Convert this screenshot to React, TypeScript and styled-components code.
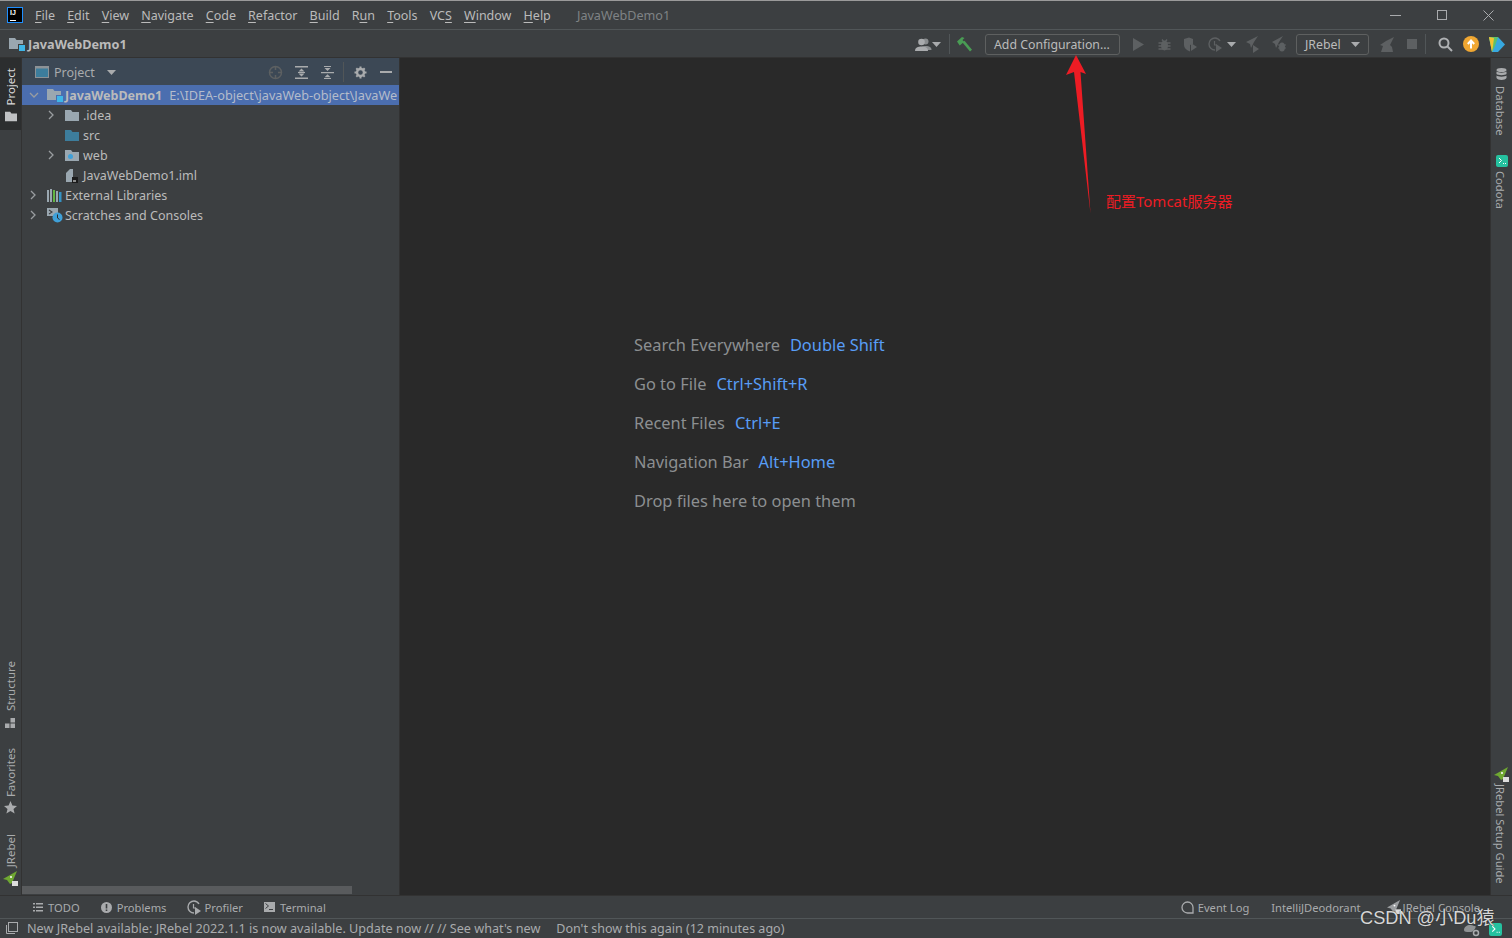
import React from "react";
import styled, { createGlobalStyle } from "styled-components";

const GlobalStyle = createGlobalStyle`
  html, body { margin: 0; padding: 0; height: 100%; background: #3c3f41; overflow: hidden; }
  #root { height: 100%; }
  * { box-sizing: border-box; }
`;

const FONT = `"Noto Sans", "Noto Sans CJK SC", sans-serif`;

const Page = styled.div`
  position: relative;
  width: 1512px;
  height: 938px;
  display: flex;
  flex-direction: column;
  background: #3c3f41;
  color: #bbbbbb;
  font-family: ${FONT};
  font-size: 12.5px;
  overflow: hidden;
`;

const TitleBar = styled.div`
  height: 30px;
  display: flex;
  align-items: center;
  border-top: 1px solid #9a9a9a;
  border-bottom: 1px solid #515658;
  padding-left: 7px;
  flex: none;
`;
const Logo = styled.div`
  width: 16px;
  height: 16px;
  background: #000;
  border: 1px solid #1f8fff;
  color: #fff;
  font: bold 7px/9px "Liberation Sans", sans-serif;
  padding-left: 2px;
  position: relative;
  margin-right: 12px;
  &::after {
    content: "";
    position: absolute;
    left: 2px;
    bottom: 1px;
    width: 6px;
    height: 1px;
    background: #fff;
  }
`;
const MenuItem = styled.span`
  margin-right: 12.15px;
  font-size: 12.5px;
  color: #bbbbbb;
  u { text-underline-offset: 2px; }
`;
const WindowTitle = styled.span`
  margin-left: 14px;
  color: #7f8385;
  font-size: 12.6px;
`;
const WindowControls = styled.div`
  margin-left: auto;
  display: flex;
  align-items: center;
  gap: 36px;
  padding-right: 18px;
`;

const NavBar = styled.div`
  height: 28px;
  display: flex;
  align-items: center;
  flex: none;
  padding-left: 9px;
  border-bottom: 1px solid #323232;
`;
const Crumb = styled.span`
  font-weight: 700;
  font-size: 12.7px;
  margin-left: 3px;
  color: #bbbbbb;
`;
const NavTools = styled.div`
  margin-left: auto;
  display: flex;
  align-items: center;
  height: 100%;
  padding-top: 1px;
`;
const Slot = styled.span<{ $w: number; $ml?: number }>`
  width: ${(p) => p.$w}px;
  margin-left: ${(p) => p.$ml ?? 0}px;
  display: inline-flex;
  align-items: center;
  justify-content: center;
  flex: none;
`;
const Divider = styled.span<{ $ml: number }>`
  width: 1px;
  height: 20px;
  margin-left: ${(p) => p.$ml}px;
  background: #515658;
  flex: none;
`;
const ComboBox = styled.div<{ $w: number; $ml: number }>`
  width: ${(p) => p.$w}px;
  height: 21px;
  margin-left: ${(p) => p.$ml}px;
  border: 1px solid #5e6060;
  border-radius: 3px;
  display: flex;
  align-items: center;
  padding: 0 8px;
  font-size: 12.3px;
  color: #bbbbbb;
  white-space: nowrap;
  flex: none;
  justify-content: space-between;
`;

const Main = styled.div`
  flex: 1;
  min-height: 0;
  display: flex;
`;
const LeftStripe = styled.div`
  width: 22px;
  flex: none;
  display: flex;
  flex-direction: column;
  justify-content: space-between;
  border-right: 1px solid #323232;
  padding-bottom: 9px;
`;
const RightStripe = styled.div`
  width: 22px;
  flex: none;
  display: flex;
  flex-direction: column;
  justify-content: space-between;
  border-left: 1px solid #323232;
  padding: 10px 0 11px;
`;
const StripeGroup = styled.div<{ $gap: number }>`
  display: flex;
  flex-direction: column;
  align-items: center;
  gap: ${(p) => p.$gap}px;
`;
const LeftTab = styled.div<{ $active?: boolean; $gap?: number }>`
  display: flex;
  flex-direction: column-reverse;
  align-items: center;
  justify-content: flex-end;
  gap: ${(p) => p.$gap ?? 4}px;
  width: 21px;
  padding: ${(p) => (p.$active ? "10px 0 8px" : "0")};
  background: ${(p) => (p.$active ? "#2c2e2f" : "transparent")};
  color: ${(p) => (p.$active ? "#d8d8d8" : "#a9abad")};
`;
const RightTab = styled.div<{ $gap: number }>`
  display: flex;
  flex-direction: column;
  align-items: center;
  gap: ${(p) => p.$gap}px;
  width: 21px;
  color: #a9abad;
`;
const VerticalLeft = styled.span`
  writing-mode: vertical-rl;
  transform: rotate(180deg);
  font-size: 11.5px;
  line-height: 14px;
  white-space: nowrap;
  margin-left: 1px;
`;
const VerticalRight = styled.span`
  writing-mode: vertical-rl;
  font-size: 11.2px;
  line-height: 14px;
  white-space: nowrap;
  margin-right: 3px;
`;

const ProjectPanel = styled.div`
  width: 378px;
  flex: none;
  display: flex;
  flex-direction: column;
  border-right: 1px solid #323232;
`;
const PanelHeader = styled.div`
  height: 27px;
  flex: none;
  display: flex;
  align-items: center;
  background: #3c4855;
  padding: 1px 0 0 13px;
  color: #a9abad;
`;
const PanelTitle = styled.span`
  margin-left: 5px;
  font-size: 12.5px;
`;
const Tree = styled.div`
  flex: 1;
  min-height: 0;
`;
const Row = styled.div<{ $indent: number; $selected?: boolean }>`
  height: 20px;
  display: flex;
  align-items: center;
  padding-left: ${(p) => p.$indent}px;
  background: ${(p) => (p.$selected ? "#4b6eaf" : "transparent")};
  white-space: nowrap;
  overflow: hidden;
  font-size: 12.5px;
`;
const Chevron = styled.span`
  width: 18px;
  display: inline-flex;
  flex: none;
`;
const RowIcon = styled.span`
  width: 18px;
  display: inline-flex;
  flex: none;
`;
const ProjectName = styled.b`
  font-weight: 700;
  color: #bbbbbb;
`;
const ProjectPath = styled.span`
  margin-left: 7px;
  color: #b4bccb;
  font-size: 12.7px;
`;
const ScrollThumb = styled.div`
  width: 330px;
  height: 8px;
  margin-bottom: 1px;
  background: #595b5d;
  flex: none;
`;

const Editor = styled.div`
  flex: 1;
  min-width: 0;
  background: #292929;
  padding: 275px 0 0 234px;
  display: flex;
  flex-direction: column;
  gap: 16px;
`;
const Hint = styled.div`
  height: 23px;
  line-height: 23px;
  font-size: 16.4px;
  color: #8c8f91;
  display: flex;
  gap: 10px;
  white-space: nowrap;
`;
const Shortcut = styled.span`
  color: #589df6;
`;

const ToolBar = styled.div`
  height: 23px;
  flex: none;
  display: flex;
  align-items: center;
  border-top: 1px solid #323232;
  padding-left: 33px;
  font-size: 11.2px;
  color: #a9abad;
`;
const ToolItem = styled.span<{ $gap?: number; $ml?: number }>`
  display: inline-flex;
  align-items: center;
  gap: ${(p) => p.$gap ?? 4}px;
  margin-left: ${(p) => p.$ml ?? 0}px;
  white-space: nowrap;
`;
const ToolRight = styled.div`
  margin-left: auto;
  display: flex;
  align-items: center;
  padding-right: 32px;
`;
const StatusBar = styled.div`
  height: 20px;
  flex: none;
  display: flex;
  align-items: center;
  border-top: 1px solid #515658;
  padding: 0 0 1px 6px;
  color: #a9abad;
  white-space: nowrap;
`;
const StatusText = styled.span<{ $ml: number; $size: number }>`
  margin-left: ${(p) => p.$ml}px;
  font-size: ${(p) => p.$size}px;
`;
const StatusRight = styled.div`
  margin-left: auto;
  display: flex;
  align-items: center;
  gap: 9px;
  padding: 3px 10px 0 0;
`;

const Annotation = styled.svg`
  position: absolute;
  left: 1055px;
  top: 50px;
`;
const AnnotationText = styled.span`
  position: absolute;
  left: 1106px;
  top: 191px;
  color: #ed1c24;
  font-size: 15px;
  line-height: 20px;
  font-family: "Noto Sans", "Noto Sans CJK SC", sans-serif;
`;
const Watermark = styled.span`
  position: absolute;
  left: 1360px;
  top: 906px;
  color: #d6d6d6;
  font-size: 18.2px;
  line-height: 24px;
  white-space: nowrap;
  font-family: "Liberation Sans", "Noto Sans CJK SC", sans-serif;
  text-shadow: 0 0 1px #222;
`;

const Folder = ({ color = "#9aa7b0", size = 14 }: { color?: string; size?: number }) => (
  <svg width={size} height={size} viewBox="0 0 14 14">
    <path d="M0 2h6l1.5 2H14v9H0z" fill={color} />
  </svg>
);
const ModuleFolder = ({ size = 16 }: { size?: number }) => (
  <svg width={size} height={size} viewBox="0 0 16 16">
    <path d="M0 2h6l1.5 2H14v4H9v5H0z" fill="#9aa7b0" />
    <rect x="10" y="9" width="6" height="6" fill="#3fb6e8" />
  </svg>
);
const Arrow = ({ down }: { down?: boolean }) => (
  <svg width="10" height="10" viewBox="0 0 10 10">
    <path d={down ? "M1 3l4 4 4-4" : "M2 1l4 4-4 4"} fill="none" stroke="#9a9da0" strokeWidth="1.3" />
  </svg>
);
const Caret = ({ color = "#a9abad" }: { color?: string }) => (
  <svg width="9" height="5" viewBox="0 0 9 5">
    <path d="M0 0h9L4.5 5z" fill={color} />
  </svg>
);
const DIM = "#5d6062";

const ProjectTool = () => (
  <svg width="14" height="12" viewBox="0 0 14 12">
    <rect width="14" height="12" fill="#8d9296" />
    <rect x="1" y="2.5" width="12" height="8.5" fill="#3d7d9c" />
  </svg>
);
const Locate = () => (
  <svg width="15" height="15" viewBox="0 0 15 15" fill="none" stroke={DIM} strokeWidth="1.5">
    <circle cx="7.5" cy="7.5" r="6" />
    <path d="M7.5 1v4M7.5 10v4M1 7.5h4M10 7.5h4" />
  </svg>
);
const ExpandAll = () => (
  <svg width="13" height="13" viewBox="0 0 13 13" fill="#a9abad">
    <path d="M0 0h13v1.5H0zM0 11.500h13V13H0zM6.500 2.500L9.500 5.500h-6zM6.500 10.500L3.500 7.500h6zM3 6h7v1H3z" />
  </svg>
);
const CollapseAll = () => (
  <svg width="13" height="13" viewBox="0 0 13 13" fill="#a9abad">
    <path d="M0 6h13v1.300H0zM6.500 5L3.500 2h6zM6.500 8.300l3 3h-6zM3 0h7v1H3zM3 12h7v1H3z" />
  </svg>
);
const Gear = ({ size = 13, color = "#a9abad" }: { size?: number; color?: string }) => (
  <svg width={size} height={size} viewBox="0 0 13 13">
    <circle cx="6.500" cy="6.500" r="3.500" fill="none" stroke={color} strokeWidth="2.400" />
    <path d="M6.500 0.500v12M0.500 6.500h12M2.300 2.300l8.400 8.400M10.700 2.300l-8.400 8.400" stroke={color} strokeWidth="2" strokeDasharray="2 8 2 0" />
  </svg>
);
const Hide = () => (
  <svg width="12" height="2" viewBox="0 0 12 2">
    <rect width="12" height="2" fill="#a9abad" />
  </svg>
);
const FileIcon = () => (
  <svg width="14" height="15" viewBox="0 0 14 15">
    <path d="M1 5l4-4h3v13H1z" fill="#9aa7b0" />
    <rect x="7" y="9" width="6" height="6" fill="#1b1b1b" />
    <rect x="8" y="12.500" width="3" height="1" fill="#fff" />
  </svg>
);
const Libraries = () => (
  <svg width="15" height="13" viewBox="0 0 15 13">
    <rect x="0" y="1" width="2" height="12" fill="#9aa7b0" />
    <rect x="3" y="0" width="2" height="13" fill="#9aa7b0" />
    <rect x="6" y="1" width="2" height="12" fill="#62b543" />
    <rect x="9" y="2" width="2" height="11" fill="#9aa7b0" />
    <rect x="12" y="3" width="2.500" height="10" fill="#3592c4" />
  </svg>
);
const Scratches = () => (
  <svg width="16" height="15" viewBox="0 0 16 15">
    <rect x="0" y="0" width="11" height="8" fill="#9aa7b0" />
    <path d="M2 2l3 2-3 2" fill="none" stroke="#3c3f41" strokeWidth="1.100" />
    <circle cx="10.500" cy="9.500" r="5" fill="#3fa0d8" />
    <path d="M10.500 6.500v3.500l2 1.500" fill="none" stroke="#2b2b2b" strokeWidth="1" />
  </svg>
);
const WebFolder = () => (
  <svg width="14" height="14" viewBox="0 0 14 14">
    <path d="M0 2h6l1.500 2H14v9H0z" fill="#9aa7b0" />
    <circle cx="5.500" cy="8.500" r="2.500" fill="#3fa0d8" />
  </svg>
);

const People = () => (
  <svg width="17" height="13" viewBox="0 0 17 13" fill="#a9abad">
    <circle cx="10.500" cy="3.500" r="3" fill="#8a8d8f" />
    <path d="M5 12c0-3 3-4 6-4s5.500 1 5.500 4z" fill="#8a8d8f" />
    <circle cx="6.500" cy="4" r="3.300" />
    <path d="M0 13c0-3.500 3-4.500 6.500-4.500S13 9.500 13 13z" />
  </svg>
);
const Hammer = () => (
  <svg width="16" height="15" viewBox="0 0 16 15" fill="#499c54">
    <path d="M0 4.500L5 0l2.500 1-2 2 1.700 1.700L2.700 8.500z" />
    <path d="M5.500 5.500l2-1.800 7.500 9-2 1.800z" />
  </svg>
);
const Play = () => (
  <svg width="11" height="13" viewBox="0 0 11 13">
    <path d="M0 0l11 6.500L0 13z" fill={DIM} />
  </svg>
);
const Bug = ({ size = 13 }: { size?: number }) => (
  <svg width={size} height={size} viewBox="0 0 13 13" stroke={DIM} fill={DIM}>
    <ellipse cx="6.500" cy="7.500" rx="3.500" ry="5" stroke="none" />
    <path d="M4 1.500l1.500 2M9 1.500l-1.500 2M0.500 5h12M0.500 8h12M0.500 11h12" strokeWidth="1.300" fill="none" />
  </svg>
);
const Coverage = () => (
  <svg width="15" height="15" viewBox="0 0 15 15" fill={DIM}>
    <path d="M1 2l5-1.500L10 2v5l-3 1v6.500C3 13 1 11 1 8z" />
    <path d="M8 6l6 4-6 4z" />
  </svg>
);
const Profiler = ({ color = DIM }: { color?: string }) => (
  <svg width="15" height="15" viewBox="0 0 15 15">
    <path d="M7 1a6 6 0 1 0 0 12" fill="none" stroke={color} strokeWidth="1.400" />
    <path d="M7 1a6 6 0 0 1 5 3" fill="none" stroke={color} strokeWidth="1.400" />
    <path d="M6.500 4v4h2" fill="none" stroke={color} strokeWidth="1.200" />
    <path d="M8 7l6 4-6 4z" fill={color} />
  </svg>
);
const RocketPlay = () => (
  <svg width="15" height="17" viewBox="0 0 15 17" fill={DIM}>
    <path d="M13 0L1 6l4 2 1 4 3-6z" />
    <path d="M8 9l6 4-6 4z" />
  </svg>
);
const RocketBug = () => (
  <svg width="16" height="16" viewBox="0 0 16 16" fill={DIM}>
    <path d="M12 0L1 6l3 2 1 4 3-6z" />
    <ellipse cx="11" cy="11" rx="3" ry="4.500" />
    <path d="M7 9h8M7 12h8" stroke={DIM} />
  </svg>
);
const Rabbit = () => (
  <svg width="16" height="16" viewBox="0 0 16 16" fill={DIM}>
    <path d="M15 1L7 5 1 9l3 1-2 6h12l-1-5-2-2z" />
  </svg>
);
const Stop = () => (
  <svg width="10" height="10" viewBox="0 0 10 10">
    <rect width="10" height="10" fill={DIM} />
  </svg>
);
const Search = () => (
  <svg width="15" height="15" viewBox="0 0 15 15" fill="none" stroke="#afb1b3" strokeWidth="2">
    <circle cx="6" cy="6" r="4.500" />
    <path d="M9.500 9.500l4.500 4.500" />
  </svg>
);
const UpdateBadge = () => (
  <svg width="16" height="16" viewBox="0 0 16 16">
    <circle cx="8" cy="8" r="8" fill="#f0a732" />
    <path d="M8 12.500V5M4.800 8L8 4.500 11.200 8" fill="none" stroke="#fff" strokeWidth="2" />
  </svg>
);
const ColorLogo = () => (
  <svg width="16" height="15" viewBox="0 0 16 15">
    <path d="M0 0h9l7 7.500-7 7.500H3z" fill="#37a8e0" />
    <path d="M0 0h9L6 9 3 15z" fill="#5dc06a" />
    <path d="M0 0l5 1-1 8-1 6z" fill="#f2c230" />
  </svg>
);
const Database = () => (
  <svg width="11" height="12" viewBox="0 0 11 12" fill="#a9abad">
    <ellipse cx="5.500" cy="2" rx="5" ry="2" />
    <path d="M0.500 3.500c1 1.500 9 1.500 10 0V6c-1 1.500-9 1.500-10 0zM0.500 7.500c1 1.500 9 1.500 10 0V10c-1 2.500-9 2.500-10 0z" />
  </svg>
);
const Codota = ({ size = 12 }: { size?: number }) => (
  <svg width={size} height={size} viewBox="0 0 12 12">
    <rect width="12" height="12" rx="2" fill="#25c2a0" />
    <path d="M3 3l2.500 2.500L3 8" fill="none" stroke="#fff" strokeWidth="1" />
    <path d="M7 8.500h1M9 8.500h1" stroke="#fff" strokeWidth="1" />
  </svg>
);
const JRebelMark = ({ color = "#6fa832", size = 15 }: { color?: string; size?: number }) => (
  <svg width={size} height={size} viewBox="0 0 15 15">
    <path d="M14 0L0 8l4 1 3 4 2-1z" fill={color} />
    <circle cx="8" cy="6" r="1" fill="#fff" />
    <rect x="9" y="10" width="6" height="5" fill="#ddd" />
  </svg>
);
const Structure = () => (
  <svg width="11" height="10" viewBox="0 0 11 10" fill="#a9abad">
    <rect x="5.500" y="0" width="4.500" height="4.500" />
    <rect x="0" y="5.500" width="4.500" height="4.500" />
    <rect x="5.500" y="5.500" width="4.500" height="4.500" />
  </svg>
);
const Star = () => (
  <svg width="13" height="13" viewBox="0 0 13 13">
    <path d="M6.500 0l1.900 4.500 4.600.4-3.500 3 1.100 4.600-4.100-2.500-4.100 2.500 1.100-4.600L0 4.900l4.600-.4z" fill="#a9abad" />
  </svg>
);
const Todo = () => (
  <svg width="10" height="9" viewBox="0 0 10 9" fill="#a9abad">
    <path d="M0 0h2v1.500H0zM3 0h7v1.500H3zM0 3.500h2V5H0zM3 3.500h7V5H3zM0 7h2v1.500H0zM3 7h7v1.500H3z" />
  </svg>
);
const Problems = () => (
  <svg width="11" height="11" viewBox="0 0 11 11">
    <circle cx="5.500" cy="5.500" r="5.500" fill="#a9abad" />
    <path d="M4.700 2h1.600v4.500H4.700zM4.700 7.500h1.600V9H4.700z" fill="#3c3f41" />
  </svg>
);
const Terminal = () => (
  <svg width="11" height="10" viewBox="0 0 11 10">
    <rect width="11" height="10" fill="#a9abad" />
    <path d="M1.500 1.500L4.500 4 1.500 6.500M5 7.500h4" fill="none" stroke="#3c3f41" strokeWidth="1" />
  </svg>
);
const EventLog = () => (
  <svg width="13" height="13" viewBox="0 0 13 13">
    <path d="M6.500 1a5.500 5.500 0 1 0 0 11H12V6.500A5.500 5.500 0 0 0 6.500 1z" fill="none" stroke="#a9abad" strokeWidth="1.300" />
  </svg>
);
const Frame = () => (
  <svg width="12" height="12" viewBox="0 0 12 12" fill="none" stroke="#a9abad">
    <rect x="2.500" y="0.500" width="9" height="9" />
    <path d="M0.500 3v8.500H9" />
  </svg>
);
const CloudGear = () => (
  <svg width="16" height="14" viewBox="0 0 16 14">
    <path d="M0 7c0-3 3-5 6-5s3 1 5 1-1 6-4 6H3C1 9 0 8 0 7z" fill="#8f9294" />
    <circle cx="12" cy="10" r="2.500" fill="none" stroke="#a9abad" strokeWidth="1.500" />
  </svg>
);

const menu: [string, string, string][] = [
  ["", "F", "ile"],
  ["", "E", "dit"],
  ["", "V", "iew"],
  ["", "N", "avigate"],
  ["", "C", "ode"],
  ["", "R", "efactor"],
  ["", "B", "uild"],
  ["R", "u", "n"],
  ["", "T", "ools"],
  ["VC", "S", ""],
  ["", "W", "indow"],
  ["", "H", "elp"],
];

const hints: [string, string][] = [
  ["Search Everywhere", "Double Shift"],
  ["Go to File", "Ctrl+Shift+R"],
  ["Recent Files", "Ctrl+E"],
  ["Navigation Bar", "Alt+Home"],
  ["Drop files here to open them", ""],
];

export default function App() {
  return (
    <Page>
      <GlobalStyle />
      <TitleBar>
        <Logo>IJ</Logo>
        {menu.map(([before, key, after]) => (
          <MenuItem key={before + key}>
            {before}
            <u>{key}</u>
            {after}
          </MenuItem>
        ))}
        <WindowTitle>JavaWebDemo1</WindowTitle>
        <WindowControls>
          <svg width="11" height="1" viewBox="0 0 11 1">
            <rect width="11" height="1" fill="#a9abad" />
          </svg>
          <svg width="10" height="10" viewBox="0 0 10 10" fill="none" stroke="#a9abad">
            <rect x="0.500" y="0.500" width="9" height="9" />
          </svg>
          <svg width="11" height="11" viewBox="0 0 11 11" stroke="#a9abad">
            <path d="M0.500 0.500l10 10M10.500 0.500l-10 10" />
          </svg>
        </WindowControls>
      </TitleBar>

      <NavBar>
        <ModuleFolder />
        <Crumb>JavaWebDemo1</Crumb>
        <NavTools>
          <Slot $w={17}><People /></Slot>
          <Slot $w={9} $ml={0}><Caret /></Slot>
          <Divider $ml={8} />
          <Slot $w={16} $ml={7}><Hammer /></Slot>
          <ComboBox $w={135} $ml={12}>Add Configuration...</ComboBox>
          <Slot $w={11} $ml={13}><Play /></Slot>
          <Slot $w={13} $ml={14}><Bug /></Slot>
          <Slot $w={15} $ml={12}><Coverage /></Slot>
          <Slot $w={15} $ml={10}><Profiler /></Slot>
          <Slot $w={9} $ml={4}><Caret /></Slot>
          <Slot $w={15} $ml={9}><RocketPlay /></Slot>
          <Slot $w={16} $ml={11}><RocketBug /></Slot>
          <ComboBox $w={73} $ml={9}>
            JRebel
            <Caret />
          </ComboBox>
          <Slot $w={16} $ml={10}><Rabbit /></Slot>
          <Slot $w={10} $ml={12}><Stop /></Slot>
          <Divider $ml={8} />
          <Slot $w={15} $ml={12}><Search /></Slot>
          <Slot $w={16} $ml={10}><UpdateBadge /></Slot>
          <Slot $w={16} $ml={10}><ColorLogo /></Slot>
          <Slot $w={7} />
        </NavTools>
      </NavBar>

      <Main>
        <LeftStripe>
          <LeftTab $active>
            <Slot $w={12}><Folder color="#c0c2c4" size={12} /></Slot>
            <VerticalLeft>Project</VerticalLeft>
          </LeftTab>
          <StripeGroup $gap={20}>
            <LeftTab $gap={6}>
              <Structure />
              <VerticalLeft>Structure</VerticalLeft>
            </LeftTab>
            <LeftTab>
              <Star />
              <VerticalLeft>Favorites</VerticalLeft>
            </LeftTab>
            <LeftTab>
              <JRebelMark />
              <VerticalLeft>JRebel</VerticalLeft>
            </LeftTab>
          </StripeGroup>
        </LeftStripe>

        <ProjectPanel>
          <PanelHeader>
            <ProjectTool />
            <PanelTitle>Project</PanelTitle>
            <Slot $w={9} $ml={12}><Caret /></Slot>
            <Slot $w={15} $ml={152}><Locate /></Slot>
            <Slot $w={13} $ml={12}><ExpandAll /></Slot>
            <Slot $w={13} $ml={13}><CollapseAll /></Slot>
            <Divider $ml={9} />
            <Slot $w={13} $ml={10}><Gear /></Slot>
            <Slot $w={12} $ml={13}><Hide /></Slot>
          </PanelHeader>
          <Tree>
            <Row $indent={7} $selected>
              <Chevron><Arrow down /></Chevron>
              <RowIcon><ModuleFolder /></RowIcon>
              <ProjectName>JavaWebDemo1</ProjectName>
              <ProjectPath>E:\IDEA-object\javaWeb-object\JavaWe</ProjectPath>
            </Row>
            <Row $indent={25}>
              <Chevron><Arrow /></Chevron>
              <RowIcon><Folder /></RowIcon>
              .idea
            </Row>
            <Row $indent={43}>
              <RowIcon><Folder color="#3d7d9c" /></RowIcon>
              src
            </Row>
            <Row $indent={25}>
              <Chevron><Arrow /></Chevron>
              <RowIcon><WebFolder /></RowIcon>
              web
            </Row>
            <Row $indent={43}>
              <RowIcon><FileIcon /></RowIcon>
              JavaWebDemo1.iml
            </Row>
            <Row $indent={7}>
              <Chevron><Arrow /></Chevron>
              <RowIcon><Libraries /></RowIcon>
              External Libraries
            </Row>
            <Row $indent={7}>
              <Chevron><Arrow /></Chevron>
              <RowIcon><Scratches /></RowIcon>
              Scratches and Consoles
            </Row>
          </Tree>
          <ScrollThumb />
        </ProjectPanel>

        <Editor>
          {hints.map(([label, keys]) => (
            <Hint key={label}>
              <span>{label}</span>
              {keys && <Shortcut>{keys}</Shortcut>}
            </Hint>
          ))}
        </Editor>

        <RightStripe>
          <StripeGroup $gap={19}>
            <RightTab $gap={6}>
              <Database />
              <VerticalRight>Database</VerticalRight>
            </RightTab>
            <RightTab $gap={4}>
              <Codota />
              <VerticalRight>Codota</VerticalRight>
            </RightTab>
          </StripeGroup>
          <RightTab $gap={2}>
            <JRebelMark />
            <VerticalRight>JRebel Setup Guide</VerticalRight>
          </RightTab>
        </RightStripe>
      </Main>

      <ToolBar>
        <ToolItem $gap={5}><Todo />TODO</ToolItem>
        <ToolItem $gap={5} $ml={21}><Problems />Problems</ToolItem>
        <ToolItem $ml={21} $gap={2}><Profiler color="#a9abad" />Profiler</ToolItem>
        <ToolItem $gap={5} $ml={21}><Terminal />Terminal</ToolItem>
        <ToolRight>
          <ToolItem><EventLog />Event Log</ToolItem>
          <ToolItem $ml={22}>IntelliJDeodorant</ToolItem>
          <ToolItem $ml={26} $gap={2}>
            <JRebelMark color="#9a9da0" size={14} />
            JRebel Console
          </ToolItem>
        </ToolRight>
      </ToolBar>

      <StatusBar>
        <Frame />
        <StatusText $ml={9} $size={12.65}>New JRebel available: JRebel 2022.1.1 is now available. Update now // // See what's new</StatusText>
        <StatusText $ml={16} $size={12.5}>Don't show this again (12 minutes ago)</StatusText>
        <StatusRight>
          <CloudGear />
          <Codota size={13} />
        </StatusRight>
      </StatusBar>

      <Annotation width="40" height="170" viewBox="0 0 40 170">
        <path d="M21 5L31 24L25.500 22L35.500 163.500L19 22L11 25z" fill="#ed1c24" />
      </Annotation>
      <AnnotationText>配置Tomcat服务器</AnnotationText>
      <Watermark>CSDN @小Du猿</Watermark>
    </Page>
  );
}
